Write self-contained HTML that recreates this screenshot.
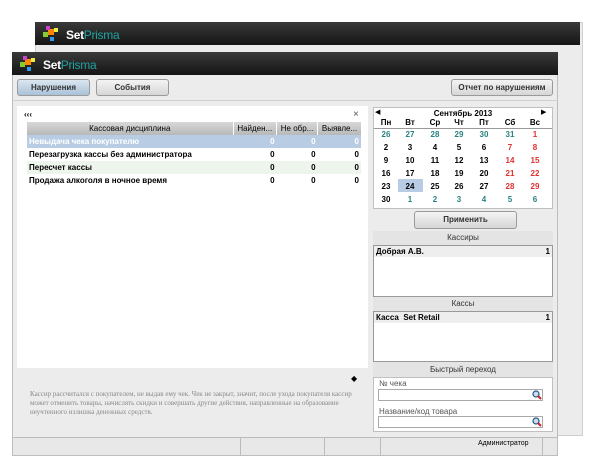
<!DOCTYPE html>
<html><head><meta charset="utf-8"><style>
*{margin:0;padding:0;box-sizing:border-box}
body{width:600px;height:470px;background:#fff;position:relative;overflow:hidden;font-family:"Liberation Sans",sans-serif;font-size:8px}
.abs{position:absolute}
.tb{background:linear-gradient(#3a3a3a,#151515);}
.logo{position:absolute;font-size:12px;font-weight:bold;color:#fff;letter-spacing:-0.3px}
.logo span{color:#1fa3a0;font-weight:normal}
.btn{position:absolute;border:1px solid #9a9a9a;border-radius:3px;background:linear-gradient(#f4f4f4,#d6d6d6);font-size:8px;font-weight:bold;color:#333;text-align:center}
.hd{position:absolute;background:#e4e4e4;text-align:center;color:#333;font-size:8px}
.cal div{position:absolute;width:20px;text-align:center;font-weight:bold;font-size:8px}
.t{color:#2a8080}.r{color:#e03030}
td,th{font-size:8px;font-weight:bold;white-space:nowrap;height:13px;padding:0 2px}
</style></head><body>
<div class="abs" style="left:35px;top:22px;width:548px;height:414px;background:#ececec;border:1px solid #cfcfcf"></div>
<div class="abs tb" style="left:35px;top:22px;width:545px;height:23px"></div>
<svg class="abs" style="left:42px;top:25px" width="20" height="18"><rect x="1" y="7" width="5" height="5" fill="#8c3"/><rect x="6" y="4" width="6" height="6" fill="#f80"/><rect x="4" y="1" width="4" height="4" fill="#c4c"/><rect x="12" y="3" width="4" height="4" fill="#ee4"/><rect x="8" y="12" width="4" height="4" fill="#39e"/></svg>
<div class="logo" style="left:66px;top:28px">Set<span>Prisma</span></div>
<div class="abs" style="left:12px;top:52px;width:546px;height:404px;background:#ececec;border:1px solid #bdbdbd"></div>
<div class="abs tb" style="left:12px;top:52px;width:546px;height:23px"></div>
<svg class="abs" style="left:19px;top:55px" width="20" height="18"><rect x="1" y="7" width="5" height="5" fill="#8c3"/><rect x="6" y="4" width="6" height="6" fill="#f80"/><rect x="4" y="1" width="4" height="4" fill="#c4c"/><rect x="12" y="3" width="4" height="4" fill="#ee4"/><rect x="8" y="12" width="4" height="4" fill="#39e"/></svg>
<div class="logo" style="left:43px;top:58px">Set<span>Prisma</span></div>
<div class="btn" style="left:17px;top:79px;width:73px;height:17px;line-height:15px;background:linear-gradient(#dbe6f0,#a9c2d8)">Нарушения</div>
<div class="btn" style="left:96px;top:79px;width:73px;height:17px;line-height:15px">События</div>
<div class="btn" style="left:451px;top:79px;width:102px;height:17px;line-height:15px">Отчет по нарушениям</div>
<div class="abs" style="left:12px;top:100px;width:546px;height:1px;background:#d0d0d0"></div>
<div class="abs" style="left:17px;top:106px;width:351px;height:262px;background:#fff"></div>
<div class="abs" style="left:24px;top:110px;font-size:8px;font-weight:bold">‹‹‹</div>
<div class="abs" style="left:353px;top:109px;font-size:10px;color:#555">×</div>
<table class="abs" style="left:27px;top:122px;width:334px;border-collapse:collapse">
<tr style="background:linear-gradient(#d8d8d8,#b8b8b8)"><th style="width:206px;font-weight:normal;text-align:center;border-right:1px solid #fff">Кассовая дисциплина</th><th style="font-weight:normal;border-right:1px solid #fff">Найден...</th><th style="font-weight:normal;border-right:1px solid #fff">Не обр...</th><th style="font-weight:normal">Выявле...</th></tr>
<tr style="background:#b8cde4;color:#fff"><td>Невыдача чека покупателю</td><td style="text-align:right">0</td><td style="text-align:right">0</td><td style="text-align:right">0</td></tr>
<tr><td>Перезагрузка кассы без администратора</td><td style="text-align:right">0</td><td style="text-align:right">0</td><td style="text-align:right">0</td></tr>
<tr style="background:#eef5ec"><td>Пересчет кассы</td><td style="text-align:right">0</td><td style="text-align:right">0</td><td style="text-align:right">0</td></tr>
<tr><td>Продажа алкоголя в ночное время</td><td style="text-align:right">0</td><td style="text-align:right">0</td><td style="text-align:right">0</td></tr>
</table>
<div class="abs" style="left:351px;top:374px;font-size:8px">◆</div>
<div class="abs" style="left:30px;top:390px;width:322px;font-family:'Liberation Serif',serif;font-size:7px;color:#888;line-height:9px">Кассир рассчитался с покупателем, не выдав ему чек. Чек не закрыт, значит, после ухода покупателя кассир может отменить товары, начислять скидки и совершать другие действия, направленные на образование неучтенного излишка денежных средств.</div>
<div class="abs" style="left:373px;top:107px;width:180px;height:102px;background:#fff;border:1px solid #c0c0c0"></div>
<div class="abs" style="left:375px;top:108px;font-size:7px">◀</div>
<div class="abs" style="left:541px;top:108px;font-size:7px">▶</div>
<div class="abs" style="left:373px;top:109px;width:180px;text-align:center;font-weight:bold;font-size:8px">Сентябрь 2013</div>
<div class="abs" style="left:374px;top:128px;width:178px;height:1px;background:#999"></div>
<div class="abs" style="left:398px;top:179px;width:25px;height:13px;background:#b8cde4"></div>
<div class="cal">
<div style="left:376px;top:118px">Пн</div><div style="left:400px;top:118px">Вт</div><div style="left:425px;top:118px">Ср</div><div style="left:449px;top:118px">Чт</div><div style="left:474px;top:118px">Пт</div><div style="left:500px;top:118px">Сб</div><div style="left:525px;top:118px">Вс</div>
<div class="t" style="left:376px;top:130px">26</div><div class="t" style="left:400px;top:130px">27</div><div class="t" style="left:425px;top:130px">28</div><div class="t" style="left:449px;top:130px">29</div><div class="t" style="left:474px;top:130px">30</div><div class="t" style="left:500px;top:130px">31</div><div class="r" style="left:525px;top:130px">1</div>
<div style="left:376px;top:143px">2</div><div style="left:400px;top:143px">3</div><div style="left:425px;top:143px">4</div><div style="left:449px;top:143px">5</div><div style="left:474px;top:143px">6</div><div class="r" style="left:500px;top:143px">7</div><div class="r" style="left:525px;top:143px">8</div>
<div style="left:376px;top:156px">9</div><div style="left:400px;top:156px">10</div><div style="left:425px;top:156px">11</div><div style="left:449px;top:156px">12</div><div style="left:474px;top:156px">13</div><div class="r" style="left:500px;top:156px">14</div><div class="r" style="left:525px;top:156px">15</div>
<div style="left:376px;top:169px">16</div><div style="left:400px;top:169px">17</div><div style="left:425px;top:169px">18</div><div style="left:449px;top:169px">19</div><div style="left:474px;top:169px">20</div><div class="r" style="left:500px;top:169px">21</div><div class="r" style="left:525px;top:169px">22</div>
<div style="left:376px;top:182px">23</div><div style="left:400px;top:182px">24</div><div style="left:425px;top:182px">25</div><div style="left:449px;top:182px">26</div><div style="left:474px;top:182px">27</div><div class="r" style="left:500px;top:182px">28</div><div class="r" style="left:525px;top:182px">29</div>
<div style="left:376px;top:195px">30</div><div class="t" style="left:400px;top:195px">1</div><div class="t" style="left:425px;top:195px">2</div><div class="t" style="left:449px;top:195px">3</div><div class="t" style="left:474px;top:195px">4</div><div class="t" style="left:500px;top:195px">5</div><div class="t" style="left:525px;top:195px">6</div>
</div>
<div class="btn" style="left:414px;top:211px;width:103px;height:18px;line-height:16px">Применить</div>
<div class="hd" style="left:373px;top:231px;width:180px;height:14px;line-height:14px">Кассиры</div>
<div class="abs" style="left:373px;top:245px;width:180px;height:52px;background:#fff;border:1px solid #999"></div>
<div class="abs" style="left:374px;top:246px;width:178px;height:11px;background:#eee;font-weight:bold;padding:0 2px;line-height:11px">Добрая А.В.<span style="float:right">1</span></div>
<div class="hd" style="left:373px;top:297px;width:180px;height:14px;line-height:14px">Кассы</div>
<div class="abs" style="left:373px;top:311px;width:180px;height:51px;background:#fff;border:1px solid #999"></div>
<div class="abs" style="left:374px;top:312px;width:178px;height:11px;background:#eee;font-weight:bold;padding:0 2px;line-height:11px">Касса&nbsp; Set Retail<span style="float:right">1</span></div>
<div class="hd" style="left:373px;top:362px;width:180px;height:15px;line-height:15px">Быстрый переход</div>
<div class="abs" style="left:373px;top:377px;width:180px;height:55px;background:#fff;border:1px solid #c0c0c0"></div>
<div class="abs" style="left:379px;top:379px;color:#555">№ чека</div>
<div class="abs" style="left:378px;top:389px;width:165px;height:12px;border:1px solid #aaa"></div>
<div class="abs" style="left:379px;top:407px;color:#555">Название/код товара</div>
<div class="abs" style="left:378px;top:416px;width:165px;height:12px;border:1px solid #aaa"></div>
<svg class="abs" style="left:532px;top:390px" width="10" height="10"><circle cx="4" cy="4" r="3" fill="#cde" stroke="#258" stroke-width="1.2"/><line x1="6" y1="6" x2="9" y2="9" stroke="#c22" stroke-width="2"/></svg>
<svg class="abs" style="left:532px;top:417px" width="10" height="10"><circle cx="4" cy="4" r="3" fill="#cde" stroke="#258" stroke-width="1.2"/><line x1="6" y1="6" x2="9" y2="9" stroke="#c22" stroke-width="2"/></svg>
<div class="abs" style="left:13px;top:437px;width:544px;height:18px;background:#e8e8e8;border-top:1px solid #bbb"></div>
<div class="abs" style="left:240px;top:437px;width:1px;height:18px;background:#bbb"></div>
<div class="abs" style="left:324px;top:437px;width:1px;height:18px;background:#bbb"></div>
<div class="abs" style="left:380px;top:437px;width:1px;height:18px;background:#bbb"></div>
<div class="abs" style="left:542px;top:437px;width:1px;height:18px;background:#bbb"></div>
<div class="abs" style="left:478px;top:440px;font-size:7px">Администратор</div>
</body></html>
